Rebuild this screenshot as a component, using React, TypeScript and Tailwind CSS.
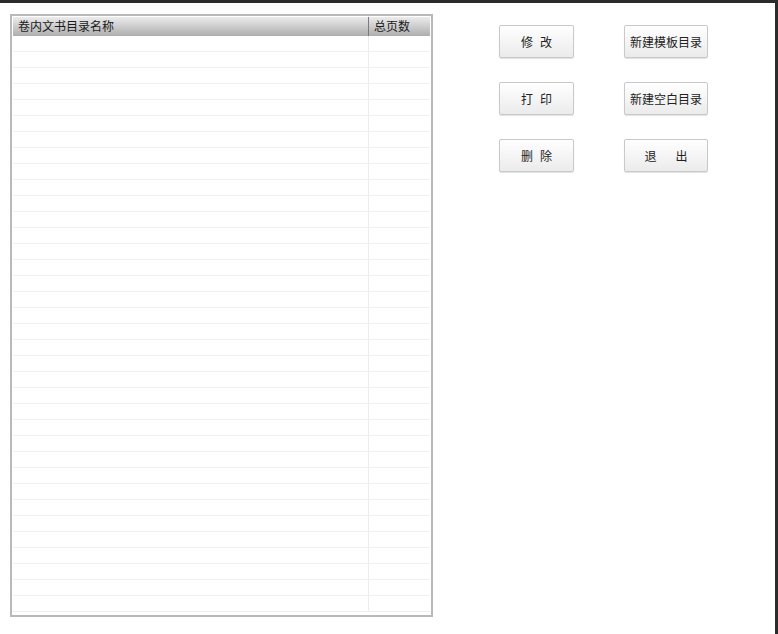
const rows = Array.from({ length: 36 }, (_, i) => i)

const Btn = ({ label, wide }: { label: string; wide?: boolean }) => (
  <button
    className={`flex h-[33px] items-center justify-center rounded-[2px] border border-[#c9c9c9] bg-gradient-to-b from-[#ffffff] to-[#ebebeb] text-[12px] text-[#222] shadow-[0_1px_1px_rgba(0,0,0,0.12)] ${
      wide ? 'w-[84px] tracking-normal' : 'w-[75px] tracking-[0.6em] pl-[0.6em]'
    }`}
  >
    {label}
  </button>
)

const App = () => {
  return (
    <div
      className="h-[634px] w-[778px] overflow-hidden border-t-[3px] border-r-[3px] border-[#2b2b2b] bg-white"
      style={{ fontFamily: '"Noto Sans CJK SC", "Liberation Sans", sans-serif' }}
    >
      <div className="flex items-start pl-[10px] pt-[11px]">
        <div className="h-[603px] w-[423px] border-2 border-[#b9b9b9] bg-white p-[1px]">
          <div className="flex h-[19px] bg-gradient-to-b from-[#ececec] to-[#aeaeae] text-[12px] leading-[17px] text-[#1a1a1a]">
            <div className="w-[356px] border-r border-[#7a7a7a] pl-[5px]">卷内文书目录名称</div>
            <div className="pl-[5px]">总页数</div>
          </div>
          <div className="flex flex-col">
            {rows.map((r) => (
              <div key={r} className="flex h-[16px] border-b border-[#efefef]">
                <div className="w-[356px] border-r border-[#ececec]" />
                <div className="flex-1" />
              </div>
            ))}
          </div>
        </div>
        <div className="ml-[66px] mt-[11px] grid grid-cols-[75px_84px] content-start gap-x-[50px] gap-y-[24px]">
          <Btn label="修改" />
          <Btn label="新建模板目录" wide />
          <Btn label="打印" />
          <Btn label="新建空白目录" wide />
          <Btn label="删除" />
          <div className="flex h-[33px] w-[84px] items-center justify-center rounded-[2px] border border-[#c9c9c9] bg-gradient-to-b from-[#ffffff] to-[#ebebeb] pl-[1.6em] text-[12px] tracking-[1.6em] text-[#222] shadow-[0_1px_1px_rgba(0,0,0,0.12)]">
            退出
          </div>
        </div>
      </div>
    </div>
  )
}

export default App
